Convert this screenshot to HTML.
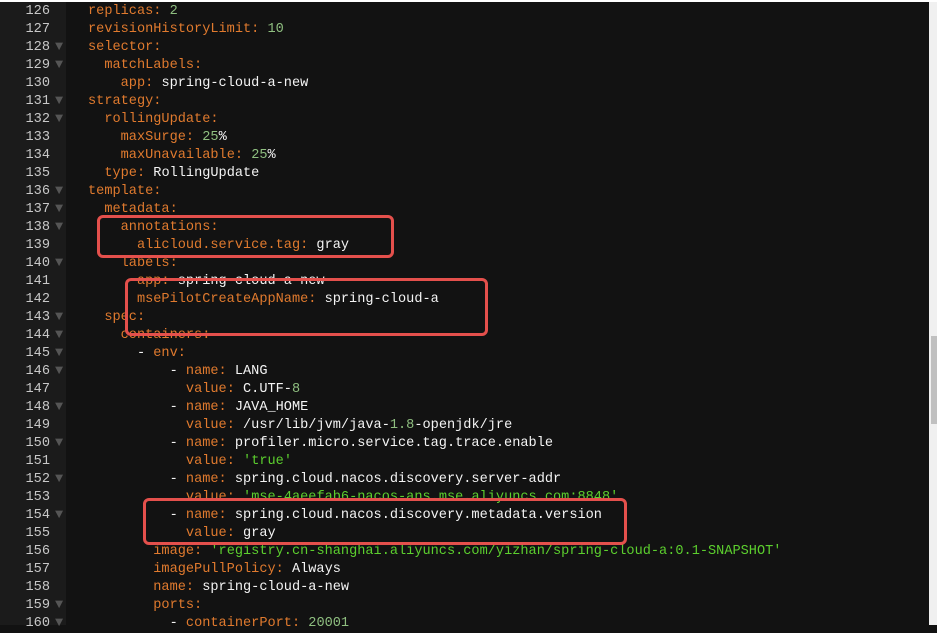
<!DOCTYPE html>
<html><head><meta charset="utf-8"><style>
html,body{margin:0;padding:0;width:937px;height:625px;overflow:hidden;background:#121212;}
.top{position:absolute;left:0;top:0;width:937px;height:2px;background:#fff;}
.gut{position:absolute;left:0;top:2px;width:66px;height:623px;background:#1b1b1b;}
.sb{position:absolute;left:929px;top:2px;width:8px;height:623px;background:#f0f0f0;}
.th{position:absolute;left:931px;top:336px;width:6px;height:88px;background:#c0c0c0;}
.ln{position:absolute;left:0;width:50px;text-align:right;color:#c8c8c8;font-size:14px;}
.ar{position:absolute;left:55px;color:#555;font-size:7px;}
.cd{position:absolute;left:88px;white-space:pre;color:#f4f4f4;}
.row{font-family:"Liberation Mono",monospace;font-size:13.6px;line-height:18px;height:18px;}
.k{color:#e07a2e}.n{color:#8fbf80}.s{color:#5ccf2e}
.box{position:absolute;border:3px solid #e4504c;border-radius:6px;box-sizing:border-box;}
</style></head><body>
<div class="top"></div><div class="gut"></div>
<div id="c"></div>
<div class="sb"></div><div class="th"></div>
<div class="box" style="left:97px;top:215px;width:297px;height:43px"></div>
<div class="box" style="left:125px;top:278px;width:363px;height:58px"></div>
<div class="box" style="left:143px;top:498px;width:484px;height:47px"></div>
<script>
var L=[
[0,'<span class="k">replicas:</span> <span class="n">2</span>'],
[0,'<span class="k">revisionHistoryLimit:</span> <span class="n">10</span>'],
[1,'<span class="k">selector:</span>'],
[1,'  <span class="k">matchLabels:</span>'],
[0,'    <span class="k">app:</span> spring-cloud-a-new'],
[1,'<span class="k">strategy:</span>'],
[1,'  <span class="k">rollingUpdate:</span>'],
[0,'    <span class="k">maxSurge:</span> <span class="n">25</span>%'],
[0,'    <span class="k">maxUnavailable:</span> <span class="n">25</span>%'],
[0,'  <span class="k">type:</span> RollingUpdate'],
[1,'<span class="k">template:</span>'],
[1,'  <span class="k">metadata:</span>'],
[1,'    <span class="k">annotations:</span>'],
[0,'      <span class="k">alicloud.service.tag:</span> gray'],
[1,'    <span class="k">labels:</span>'],
[0,'      <span class="k">app:</span> spring-cloud-a-new'],
[0,'      <span class="k">msePilotCreateAppName:</span> spring-cloud-a'],
[1,'  <span class="k">spec:</span>'],
[1,'    <span class="k">containers:</span>'],
[1,'      - <span class="k">env:</span>'],
[1,'          - <span class="k">name:</span> LANG'],
[0,'            <span class="k">value:</span> C.UTF-<span class="n">8</span>'],
[1,'          - <span class="k">name:</span> JAVA_HOME'],
[0,'            <span class="k">value:</span> /usr/lib/jvm/java-<span class="n">1.8</span>-openjdk/jre'],
[1,'          - <span class="k">name:</span> profiler.micro.service.tag.trace.enable'],
[0,'            <span class="k">value:</span> <span class="s">\'true\'</span>'],
[1,'          - <span class="k">name:</span> spring.cloud.nacos.discovery.server-addr'],
[0,'            <span class="k">value:</span> <span class="s">\'mse-4aeefab6-nacos-ans.mse.aliyuncs.com:8848\'</span>'],
[1,'          - <span class="k">name:</span> spring.cloud.nacos.discovery.metadata.version'],
[0,'            <span class="k">value:</span> gray'],
[0,'        <span class="k">image:</span> <span class="s">\'registry.cn-shanghai.aliyuncs.com/yizhan/spring-cloud-a:0.1-SNAPSHOT\'</span>'],
[0,'        <span class="k">imagePullPolicy:</span> Always'],
[0,'        <span class="k">name:</span> spring-cloud-a-new'],
[1,'        <span class="k">ports:</span>'],
[1,'          - <span class="k">containerPort:</span> <span class="n">20001</span>']
];
var h='';
for(var i=0;i<L.length;i++){var y=3+i*18;
h+='<div class="row ln" style="top:'+y+'px">'+(126+i)+'</div>';
if(L[i][0])h+='<div class="row ar" style="top:'+y+'px">&#9660;</div>';
h+='<div class="row cd" style="top:'+y+'px">'+L[i][1]+'</div>';}
document.getElementById('c').innerHTML=h;
</script>
</body></html>
